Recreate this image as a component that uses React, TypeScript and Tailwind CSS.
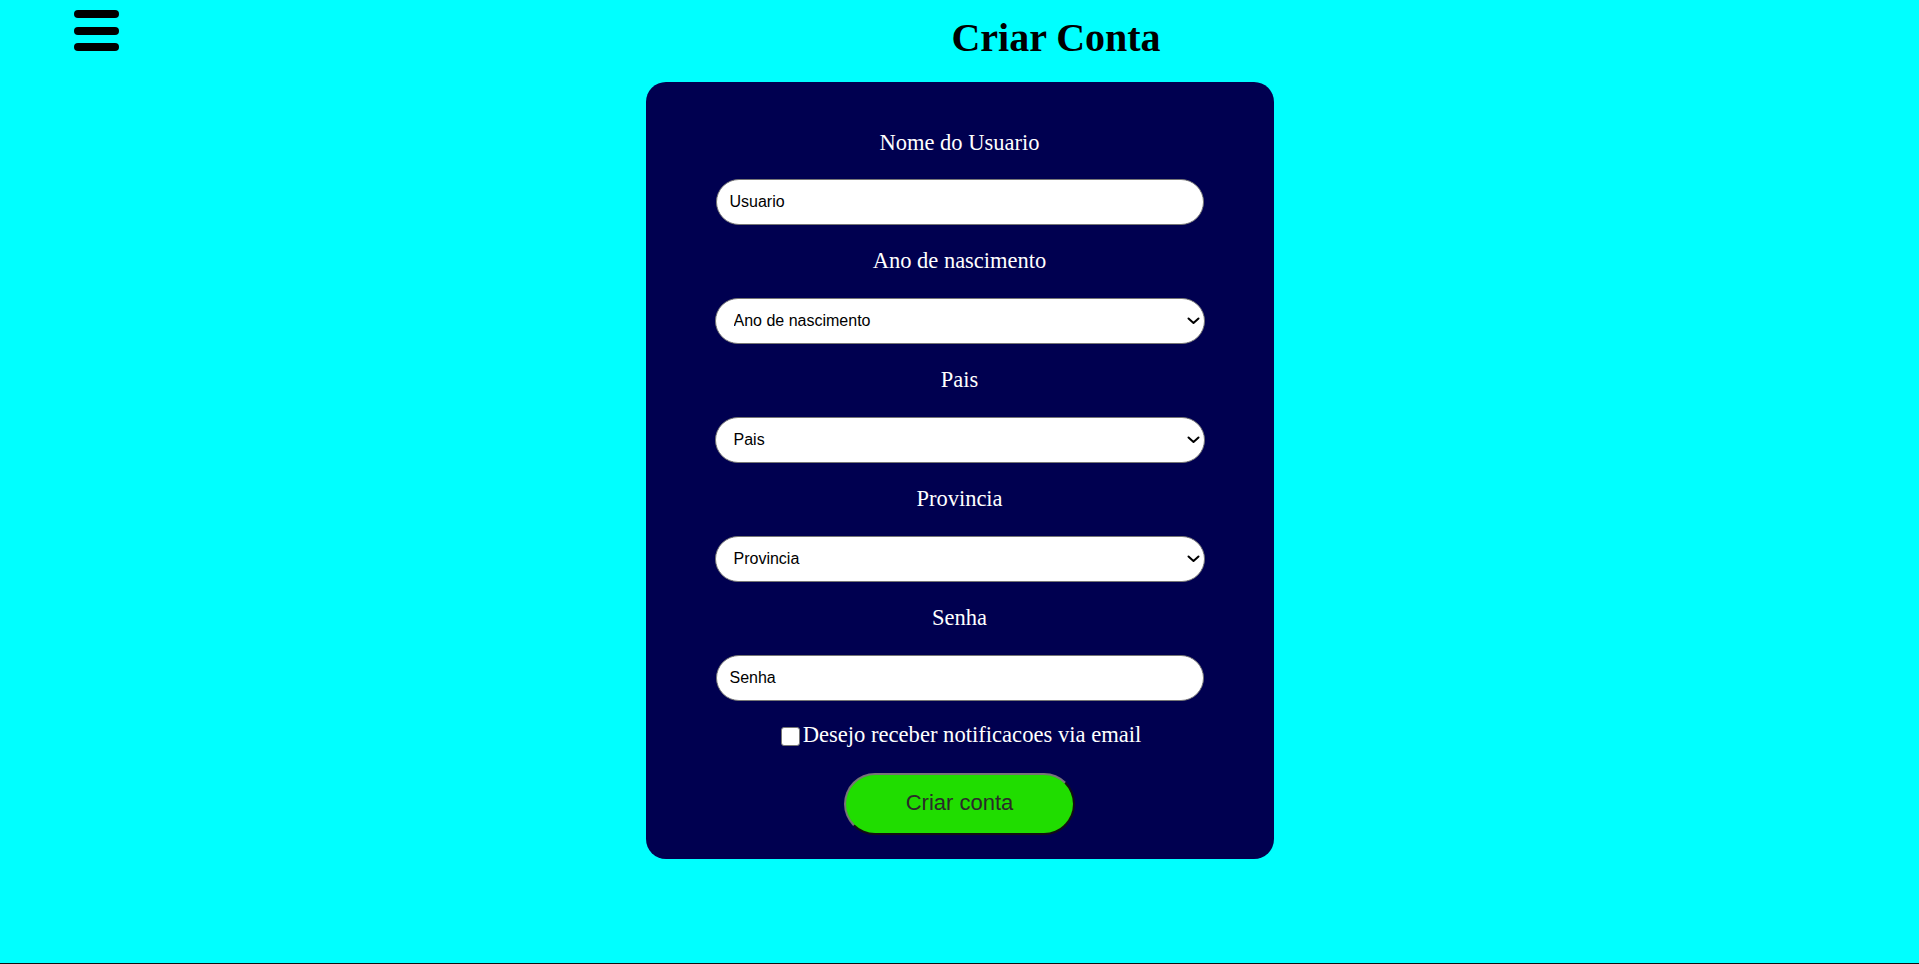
import React from "react";

const serif = { fontFamily: '"Liberation Serif", "Times New Roman", serif' };
const sans = { fontFamily: '"Liberation Sans", Arial, sans-serif' };

function Chevron() {
  return (
    <svg
      className="pointer-events-none absolute right-[5px] top-1/2 -translate-y-1/2"
      width="13"
      height="8"
      viewBox="0 0 13 8"
    >
      <path d="M1.5 1.5 L6.5 6 L11.5 1.5" fill="none" stroke="#000" strokeWidth="2" strokeLinecap="round" strokeLinejoin="round" />
    </svg>
  );
}

function Label({ children }: { children: React.ReactNode }) {
  return (
    <div className="text-white text-[22.5px] leading-[26px] h-[26px] text-center whitespace-nowrap" style={serif}>
      {children}
    </div>
  );
}

function TextField({ placeholder, type = "text" }: { placeholder: string; type?: string }) {
  return (
    <input
      type={type}
      placeholder={placeholder}
      className="block w-[488px] h-[46px] rounded-full bg-white border border-[#767676] pl-[13px] text-[16px] text-black placeholder:text-black outline-none"
      style={sans}
    />
  );
}

function SelectField({ placeholder }: { placeholder: string }) {
  return (
    <div className="relative w-[490px] h-[46px]">
      <select
        defaultValue=""
        className="appearance-none block w-full h-full rounded-full bg-white border border-[#767676] pl-[18px] text-[16px] text-black outline-none"
        style={sans}
      >
        <option value="">{placeholder}</option>
      </select>
      <Chevron />
    </div>
  );
}

export default function App() {
  return (
    <div className="h-[964px] bg-[#00ffff] border-b border-[#111] flex flex-col">
      <header className="h-[82px] flex items-start">
        <div className="ml-[74px] mt-[10px] w-[45px] flex flex-col gap-[8.5px]">
          <div className="h-[8px] rounded-full bg-black" />
          <div className="h-[8px] rounded-full bg-black" />
          <div className="h-[8px] rounded-full bg-black" />
        </div>
        <h1
          className="flex-1 ml-[74px] mt-[15px] text-center text-[40px] leading-[46px] font-bold text-black"
          style={serif}
        >
          Criar Conta
        </h1>
      </header>

      <div className="self-center w-[628px] h-[777px] rounded-[20px] bg-[#000050] px-[69px] pt-[48px] flex flex-col items-center">
        <Label>Nome do Usuario</Label>
        <div className="mt-[23px]">
          <TextField placeholder="Usuario" />
        </div>

        <div className="mt-[23px]">
          <Label>Ano de nascimento</Label>
        </div>
        <div className="mt-[24px]">
          <SelectField placeholder="Ano de nascimento" />
        </div>

        <div className="mt-[23px]">
          <Label>Pais</Label>
        </div>
        <div className="mt-[24px]">
          <SelectField placeholder="Pais" />
        </div>

        <div className="mt-[23px]">
          <Label>Provincia</Label>
        </div>
        <div className="mt-[24px]">
          <SelectField placeholder="Provincia" />
        </div>

        <div className="mt-[23px]">
          <Label>Senha</Label>
        </div>
        <div className="mt-[24px]">
          <TextField placeholder="Senha" type="password" />
        </div>

        <label className="mt-[21px] h-[26px] flex items-center text-white text-[22.6px] leading-[26px] whitespace-nowrap" style={serif}>
          <span className="ml-[3px] mr-[3px] mt-[3px] w-[19px] h-[19px] bg-white border border-[#767676] rounded-[3px] inline-block" />
          <span>Desejo receber notificacoes via email</span>
        </label>

        <button
          className="mt-[25px] w-[231px] h-[62px] pb-[4px] rounded-full bg-[#20dd00] text-[22px] text-[#2a2a2a] border-2 border-t-[#767676] border-l-[#767676] border-r-[#111] border-b-[#111]"
          style={sans}
        >
          Criar conta
        </button>
      </div>
    </div>
  );
}
